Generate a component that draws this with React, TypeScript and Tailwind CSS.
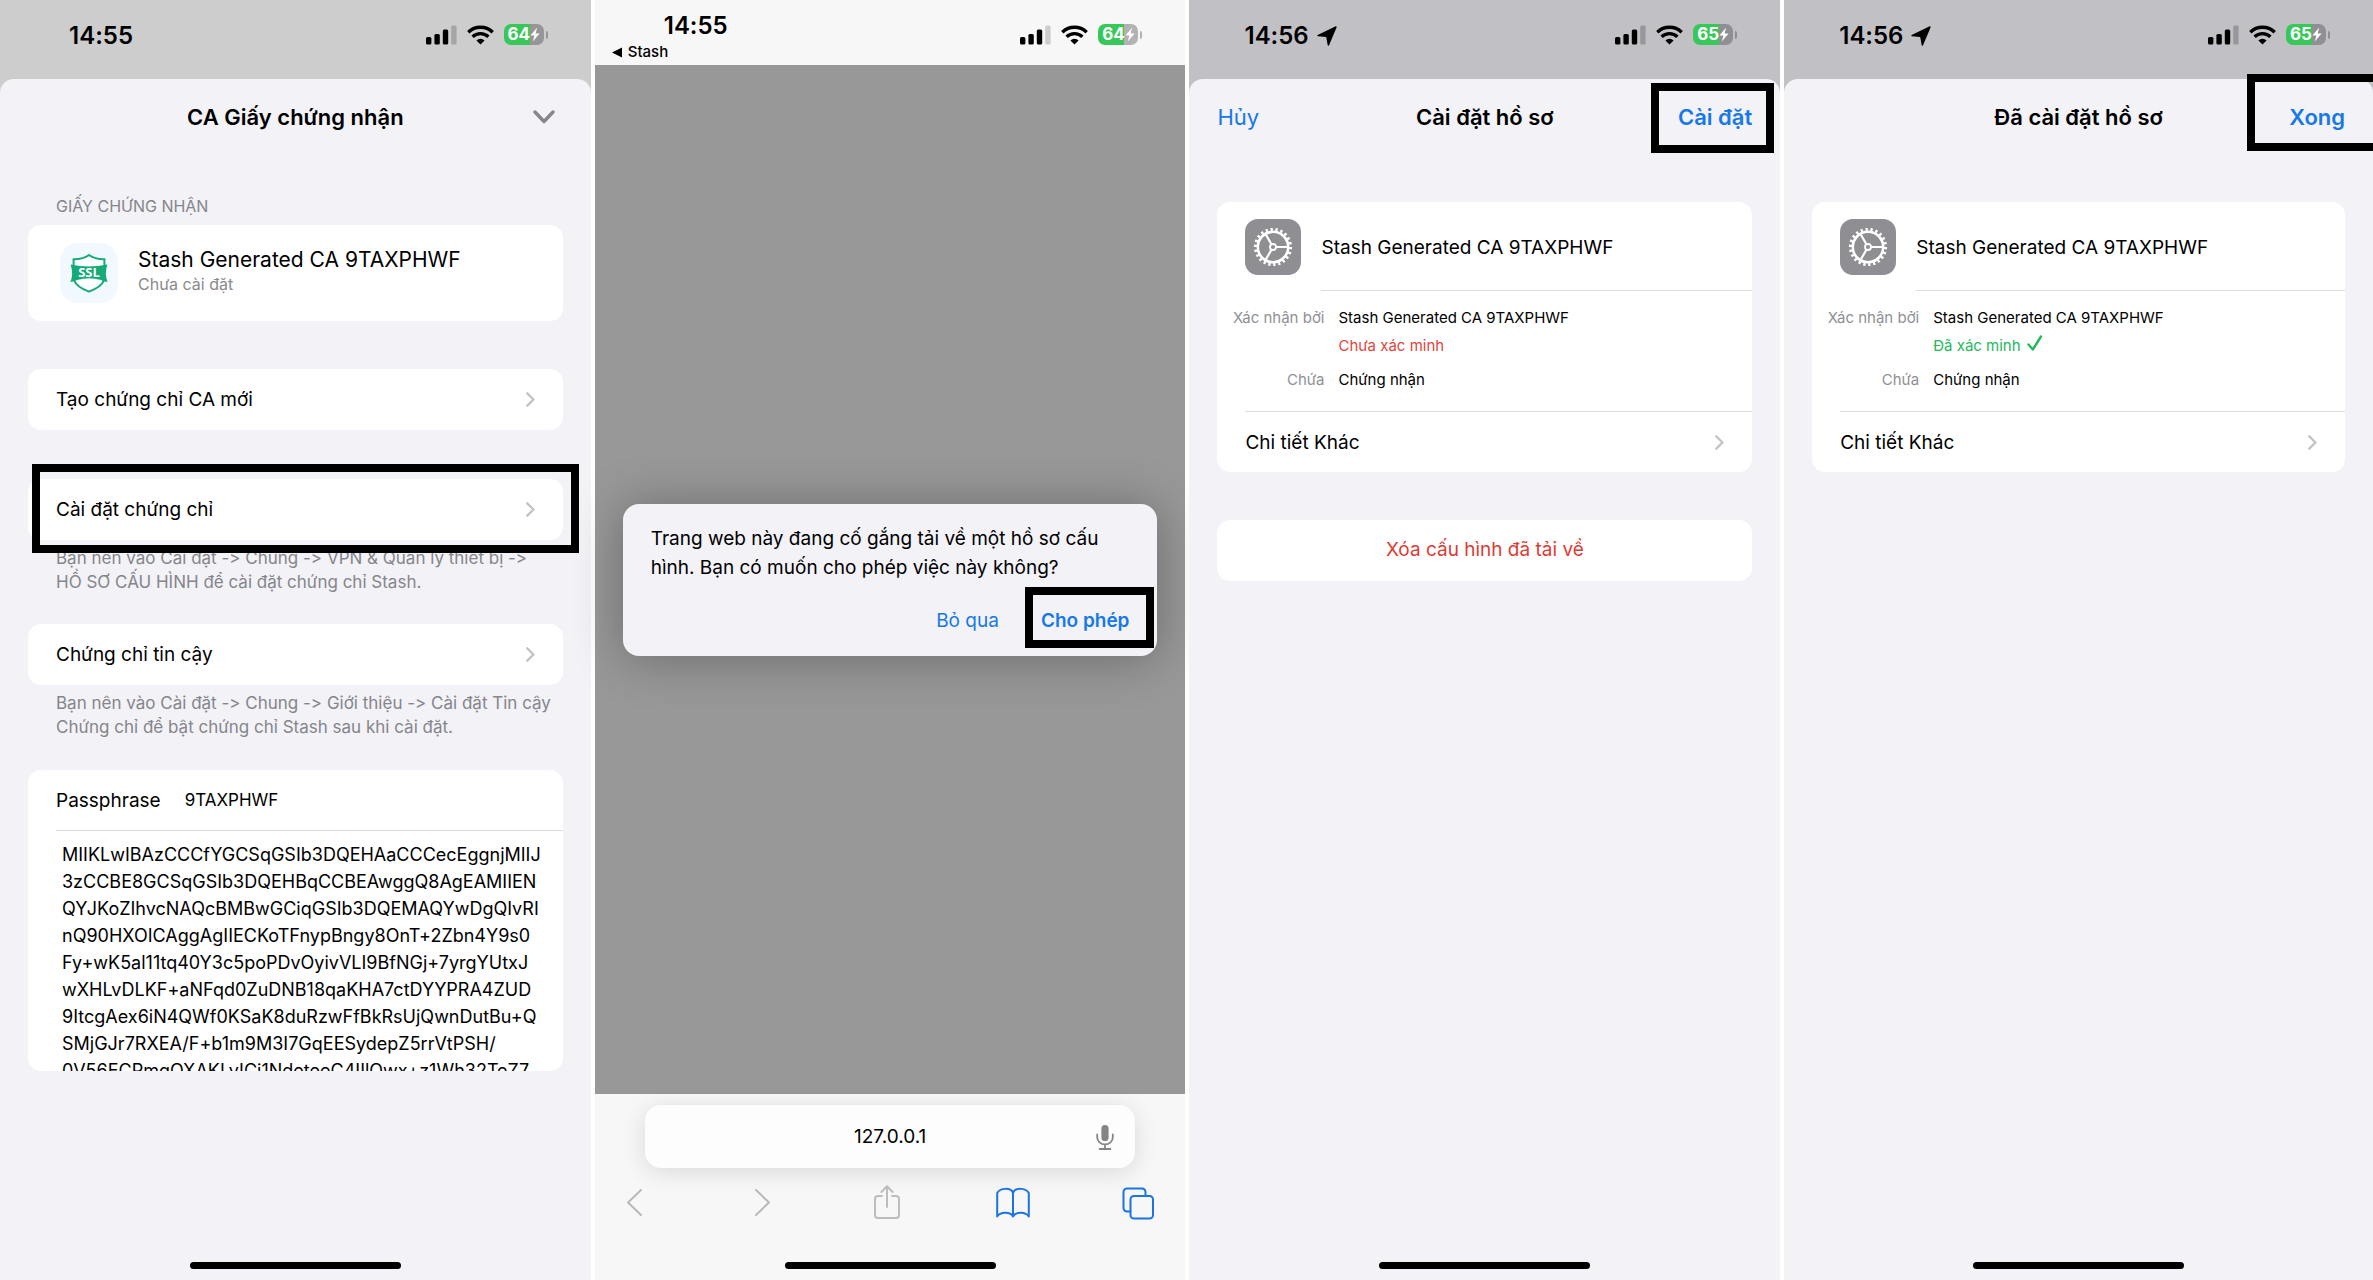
import type { ReactNode } from 'react';

const CERTIFICATE = [
  'MIIKLwIBAzCCCfYGCSqGSIb3DQEHAaCCCecEggnjMIIJ',
  '3zCCBE8GCSqGSIb3DQEHBqCCBEAwggQ8AgEAMIIEN',
  'QYJKoZIhvcNAQcBMBwGCiqGSIb3DQEMAQYwDgQIvRI',
  'nQ90HXOICAggAgIIECKoTFnypBngy8OnT+2Zbn4Y9s0',
  'Fy+wK5al11tq40Y3c5poPDvOyivVLI9BfNGj+7yrgYUtxJ',
  'wXHLvDLKF+aNFqd0ZuDNB18qaKHA7ctDYYPRA4ZUD',
  '9ItcgAex6iN4QWf0KSaK8duRzwFfBkRsUjQwnDutBu+Q',
  'SMjGJr7RXEA/F+b1m9M3I7GqEESydepZ5rrVtPSH/',
  '0V56ECPmgQXAKLvICj1NdeteeC4IIlQwx+z1Wh32TeZ7',
].join('\n');

function SignalIcon({ faded }: { faded: string }) {
  return (
    <svg width="31" height="20" viewBox="0 0 31 20" aria-hidden="true">
      <rect x="0" y="12" width="5.4" height="7.5" rx="1.5" />
      <rect x="8.4" y="9" width="5.4" height="10.5" rx="1.5" />
      <rect x="16.8" y="4.5" width="5.4" height="15" rx="1.5" />
      <rect x="25.2" y="0.5" width="5.4" height="19" rx="1.5" fill={faded} />
    </svg>
  );
}

function WifiIcon() {
  return (
    <svg width="27" height="20" viewBox="0 0 27 20" fill="none" stroke="black" strokeWidth="3.4" aria-hidden="true">
      <path d="M1.3 7.2a17.6 17.6 0 0 1 24.4 0" />
      <path d="M5.6 11.8a11.4 11.4 0 0 1 15.8 0" />
      <path d="M13.5 19.6l-4.1-4.2a5.9 5.9 0 0 1 8.2 0z" fill="black" stroke="none" />
    </svg>
  );
}

function Battery({ level, restClass }: { level: string; restClass: string }) {
  return (
    <div className="flex items-center gap-0.5">
      <div className={`flex h-[21px] w-10 items-center justify-center overflow-hidden rounded-[7px] bg-linear-to-r from-[#38c759] from-65% to-65% ${restClass}`}>
        <span className="text-[17px] leading-none font-bold text-white">{level}</span>
        <svg width="10" height="15" viewBox="0 0 10 15" fill="white" aria-hidden="true">
          <path d="M7.2 0.4 0.4 8.4h4L2.8 14.6 9.6 6.4h-4z" />
        </svg>
      </div>
      <div className={`h-2 w-0.5 rounded-r-full bg-linear-to-r from-0% to-0% ${restClass}`} />
    </div>
  );
}

function StatusIcons({ level, faded, restClass }: { level: string; faded: string; restClass: string }) {
  return (
    <div className="flex h-[21px] items-center gap-2.5">
      <SignalIcon faded={faded} />
      <WifiIcon />
      <Battery level={level} restClass={restClass} />
    </div>
  );
}

function LocationArrow() {
  return (
    <svg width="20" height="20" viewBox="0 0 20 20" stroke="black" strokeWidth="1.4" strokeLinejoin="round" aria-hidden="true">
      <path d="M19 1 11.4 19 9.8 10.4 1 9.6z" />
    </svg>
  );
}

function Chevron() {
  return (
    <svg width="9" height="15" viewBox="0 0 9 15" fill="none" stroke="#c4c4c7" strokeWidth="2.4" strokeLinecap="round" strokeLinejoin="round" aria-hidden="true">
      <path d="M1.3 1.3 7.5 7.5 1.3 13.7" />
    </svg>
  );
}

function SslIcon() {
  return (
    <div className="flex h-[60px] w-[58px] shrink-0 items-center justify-center rounded-[18px] bg-[#f2f9fe]">
      <svg width="38" height="40" viewBox="0 0 38 40" role="img" aria-label="SSL">
        <path d="M3.6 13V6.2Q13 6.4 19 2q6 4.4 15.4 4.2V13M4 27c1.8 5.5 7 8.6 15 11.6 8-3 13.2-6.1 15-11.6" fill="white" stroke="#14ab78" strokeWidth="2" />
        <path d="M.6 11.4q18.4 4.2 36.8 0-3.2 9.6.2 17.6-4.6-.4-6.6-2-12-3.6-24 0-2 1.6-6.6 2 3.4-8 .2-17.6z" fill="#14ab78" />
        <text x="19" y="24.4" textAnchor="middle" fill="white" className="font-['Open_Sans',sans-serif] text-[13px] font-bold">SSL</text>
      </svg>
    </div>
  );
}

function GearIcon() {
  return (
    <svg width="56" height="56" viewBox="0 0 56 56" fill="none" stroke="white" className="shrink-0 rounded-[13px] bg-[#8e8e93]" aria-hidden="true">
      <circle cx="28" cy="28" r="15.2" strokeWidth="2.6" />
      <circle cx="28" cy="28" r="17.6" strokeWidth="3" pathLength="220" strokeDasharray="4.6 5.4" />
      <circle cx="28" cy="28" r="3" strokeWidth="1.8" />
      <path d="M31.2 28H43M26.4 25.2 20.5 15M26.4 30.8 20.5 41" strokeWidth="2.2" />
    </svg>
  );
}

function Screen({ className, children }: { className: string; children: ReactNode }) {
  return <section className={`flex min-h-screen min-w-0 flex-col ${className}`}>{children}</section>;
}

function HomeIndicator() {
  return <div className="mx-auto mt-auto mb-[11px] h-[7px] w-[211px] rounded-full bg-black" />;
}

function StatusBar({ time, level, located, faded, restClass }: { time: string; level: string; located?: boolean; faded: string; restClass: string }) {
  return (
    <div className={`flex h-[79px] items-start justify-between pt-6 pr-[43px] ${located ? 'pl-[55px]' : 'pl-[69px]'}`}>
      <div className="flex h-6 items-center gap-2">
        <span className="text-2xl leading-none font-semibold">{time}</span>
        {located && <LocationArrow />}
      </div>
      <StatusIcons level={level} faded={faded} restClass={restClass} />
    </div>
  );
}

function Sheet({ left, title, right, children }: { left?: ReactNode; title: string; right: ReactNode; children: ReactNode }) {
  return (
    <div className="flex flex-1 flex-col rounded-t-[14px] bg-[#f2f2f7]">
      <header className="grid h-[76px] grid-cols-[1fr_auto_1fr] items-center px-7 text-[22px]">
        <div>{left}</div>
        <h1 className="font-semibold">{title}</h1>
        <div className="flex justify-end">{right}</div>
      </header>
      {children}
      <HomeIndicator />
    </div>
  );
}

function RowButton({ children }: { children: ReactNode }) {
  return (
    <button className="flex h-[61px] w-full items-center justify-between rounded-[13px] bg-white px-7 text-left text-[19px]">
      <span className="pt-0.5">{children}</span>
      <Chevron />
    </button>
  );
}

function Note({ lines }: { lines: string[] }) {
  return (
    <p className="mt-1.5 px-7 text-[17px] leading-6 whitespace-nowrap text-[#85858b]">
      {lines.map((line) => (
        <span key={line} className="block">{line}</span>
      ))}
    </p>
  );
}

function CertificateScreen() {
  return (
    <Screen className="bg-[#cdcdcd]">
      <StatusBar time="14:55" level="64" faded="#a5a5a5" restClass="to-[#969696]" />
      <Sheet
        title="CA Giấy chứng nhận"
        right={
          <button aria-label="Đóng" className="mr-2">
            <svg width="22" height="14" viewBox="0 0 22 14" fill="none" stroke="#85858a" strokeWidth="3.4" strokeLinecap="round" strokeLinejoin="round">
              <path d="M2 2l9 9.500L20 2" />
            </svg>
          </button>
        }
      >
        <div className="flex flex-col px-7 pt-[39px]">
          <h2 className="px-7 text-base leading-6 text-[#85858b]">GIẤY CHỨNG NHẬN</h2>
          <div className="mt-[7px] flex h-24 items-center gap-5 rounded-[13px] bg-white px-8">
            <SslIcon />
            <div className="pb-1">
              <p className="text-[21px] leading-[26px]">Stash Generated CA 9TAXPHWF</p>
              <p className="text-base leading-[22px] text-[#8a8a8e]">Chưa cài đặt</p>
            </div>
          </div>
          <div className="mt-12">
            <RowButton>Tạo chứng chỉ CA mới</RowButton>
          </div>
          <div className="relative mt-[49px]">
            <RowButton>Cài đặt chứng chỉ</RowButton>
            <div className="pointer-events-none absolute -top-[15px] -right-4 -bottom-[13px] left-1 border-8 border-black" />
          </div>
          <Note lines={['Bạn nên vào Cài đặt -> Chung -> VPN & Quản lý thiết bị ->', 'HỒ SƠ CẤU HÌNH để cài đặt chứng chỉ Stash.']} />
          <div className="mt-[30px]">
            <RowButton>Chứng chỉ tin cậy</RowButton>
          </div>
          <Note lines={['Bạn nên vào Cài đặt -> Chung -> Giới thiệu -> Cài đặt Tin cậy', 'Chứng chỉ để bật chứng chỉ Stash sau khi cài đặt.']} />
          <div className="mt-[31px] overflow-hidden rounded-[13px] bg-white pl-7">
            <div className="flex h-[61px] items-center gap-6 border-b border-[#dddddf] pt-0.5">
              <label htmlFor="passphrase" className="text-[19px]">Passphrase</label>
              <input id="passphrase" readOnly value="9TAXPHWF" className="min-w-0 flex-1 bg-transparent text-[17px] outline-none" />
            </div>
            <textarea
              readOnly
              aria-label="Chứng chỉ"
              value={CERTIFICATE}
              className="block h-60 w-full resize-none overflow-hidden bg-transparent pt-2.5 pl-1.5 text-lg leading-[27px] whitespace-pre outline-none"
            />
          </div>
        </div>
      </Sheet>
    </Screen>
  );
}

function ToolbarIcon({ label, className, children }: { label: string; className: string; children: ReactNode }) {
  return (
    <button aria-label={label} className={className}>
      <svg width="34" height="36" viewBox="0 0 34 36" fill="none" stroke="currentColor" strokeWidth="2" strokeLinecap="round" strokeLinejoin="round">
        {children}
      </svg>
    </button>
  );
}

function BrowserScreen() {
  return (
    <Screen className="bg-[#f7f7f7]">
      <div className="flex h-[65px] items-start justify-between pr-[43px] pl-[17px]">
        <div className="flex flex-col pt-3.5">
          <span className="pl-[52px] text-2xl leading-6 font-semibold">14:55</span>
          <a href="#stash" className="mt-1 flex items-center gap-1.5 text-[15px] leading-5 font-medium">
            <svg width="10" height="11" viewBox="0 0 10 11" aria-hidden="true">
              <path d="M10 .5v10L0 5.500z" />
            </svg>
            Stash
          </a>
        </div>
        <div className="pt-6">
          <StatusIcons level="64" faded="#cdcdcd" restClass="to-[#b2b2b2]" />
        </div>
      </div>

      <div className="flex flex-1 items-center bg-[#989898] px-7">
        <div role="dialog" aria-label="Tải về hồ sơ" className="w-full rounded-2xl bg-[#f2f2f7] px-7 py-5 text-[19px] shadow-[0_2px_50px_rgba(0,0,0,0.3)]">
          <p className="leading-[29px] whitespace-nowrap">
            <span className="block">Trang web này đang cố gắng tải về một hồ sơ cấu</span>
            <span className="block">hình. Bạn có muốn cho phép việc này không?</span>
          </p>
          <div className="mt-6 flex justify-end gap-[42px] leading-[30px] text-[#1778e8]">
            <button>Bỏ qua</button>
            <div className="relative">
              <button className="font-semibold">Cho phép</button>
              <div className="pointer-events-none absolute -top-[19px] -right-[25px] -bottom-3 -left-4 border-8 border-black" />
            </div>
          </div>
        </div>
      </div>

      <div className="flex h-[186px] flex-col pt-[11px]">
        <div className="mx-[50px] flex h-[63px] items-center rounded-2xl bg-[#fdfdfd] pr-[21px] pl-[39px] shadow-[0_4px_24px_rgba(0,0,0,0.12)]">
          <input aria-label="Địa chỉ" defaultValue="127.0.0.1" className="min-w-0 flex-1 bg-transparent pt-0.5 text-center text-[19px] outline-none" />
          <button aria-label="Nhập bằng giọng nói">
            <svg width="18" height="26" viewBox="0 0 18 26" fill="none" stroke="#858585" strokeWidth="1.8" strokeLinecap="round">
              <rect x="5.4" y="1" width="7.2" height="16" rx="3.6" fill="#858585" stroke="none" />
              <path d="M1.2 10.500v2.700a7.800 7.200 0 0 0 15.600 0v-2.700M9 20.600V25M3.600 25h10.800" />
            </svg>
          </button>
        </div>
        <div className="mt-4 flex items-center justify-between pr-[30px] pl-6">
          <ToolbarIcon label="Quay lại" className="text-[#b9b9b9]"><path d="M22 6 9 18.500 22 31" /></ToolbarIcon>
          <ToolbarIcon label="Tiến" className="text-[#b9b9b9]"><path d="M12 6l13 12.500L12 31" /></ToolbarIcon>
          <ToolbarIcon label="Chia sẻ" className="text-[#bdbdbd]">
            <path d="M12 12H8a3 3 0 0 0-3 3v16a3 3 0 0 0 3 3h18a3 3 0 0 0 3-3V15a3 3 0 0 0-3-3h-4M17 23V2.500M11.400 8 17 2.200 22.600 8" />
          </ToolbarIcon>
          <ToolbarIcon label="Dấu trang" className="text-[#1b74e4]">
            <path d="M17 9C15.400 3.400 4 3.600 1.200 9v23.500C4 28 14 27.200 17 32.500 20 27.200 30 28 32.800 32.500V9C30 3.600 18.600 3.400 17 9zM17 9v23" />
          </ToolbarIcon>
          <ToolbarIcon label="Các tab" className="text-[#1b74e4]">
            <rect x="9.5" y="12" width="22.5" height="22.5" rx="3.5" />
            <path d="M9.500 27.500H6A3.500 3.500 0 0 1 2.500 24V8A3.500 3.500 0 0 1 6 4.500h15A3.500 3.500 0 0 1 24.500 8v4" />
          </ToolbarIcon>
        </div>
        <HomeIndicator />
      </div>
    </Screen>
  );
}

function ProfileCard({ status }: { status: ReactNode }) {
  return (
    <div className="mx-7 mt-[47px] rounded-[13px] bg-white">
      <div className="flex h-[89px] items-center gap-5 pl-7">
        <GearIcon />
        <h2 className="flex flex-1 self-stretch border-b border-[#dddddf] pt-1 text-[19px]">
          <span className="self-center">Stash Generated CA 9TAXPHWF</span>
        </h2>
      </div>
      <dl className="grid grid-cols-[107px_1fr] gap-x-3.5 pt-[13px] pb-[17px] text-[15px] leading-7">
        <dt className="text-right text-[#909094]">Xác nhận bởi</dt>
        <dd>Stash Generated CA 9TAXPHWF</dd>
        <dd className="col-start-2">{status}</dd>
        <dt className="mt-1.5 text-right text-[#909094]">Chứa</dt>
        <dd className="mt-1.5">Chứng nhận</dd>
      </dl>
      <div className="ml-7 border-t border-[#dddddf]">
        <button className="flex h-[60px] w-full items-center justify-between pr-7 text-left text-[19px]">
          <span className="pt-0.5">Chi tiết Khác</span>
          <Chevron />
        </button>
      </div>
    </div>
  );
}

function InstallScreen() {
  return (
    <Screen className="bg-[#c1c0c5]">
      <StatusBar time="14:56" level="65" located faded="#98979c" restClass="to-[#8f8f94]" />
      <Sheet
        left={<button className="text-[#1778e8]">Hủy</button>}
        title="Cài đặt hồ sơ"
        right={
          <div className="relative">
            <button className="font-semibold text-[#1778e8]">Cài đặt</button>
            <div className="pointer-events-none absolute -top-[18px] -right-[22px] -bottom-[19px] -left-[27px] border-8 border-black" />
          </div>
        }
      >
        <ProfileCard status={<span className="text-[#e0453c]">Chưa xác minh</span>} />
        <button className="mx-7 mt-12 h-[61px] rounded-[13px] bg-white text-[19px] text-[#de3b33]">Xóa cấu hình đã tải về</button>
      </Sheet>
    </Screen>
  );
}

function InstalledScreen() {
  return (
    <Screen className="overflow-hidden bg-[#c1c0c5]">
      <StatusBar time="14:56" level="65" located faded="#98979c" restClass="to-[#8f8f94]" />
      <Sheet
        title="Đã cài đặt hồ sơ"
        right={
          <div className="relative">
            <button className="font-semibold text-[#1778e8]">Xong</button>
            <div className="pointer-events-none absolute -top-[27px] -right-7 -bottom-[17px] -left-[42px] border-8 border-r-0 border-black" />
          </div>
        }
      >
        <ProfileCard
          status={
            <span className="flex items-center gap-1.5 text-[#25b85a]">
              Đã xác minh
              <svg width="16" height="16" viewBox="0 0 16 16" fill="none" stroke="currentColor" strokeWidth="2.4" strokeLinecap="round" strokeLinejoin="round" className="mb-1.5" aria-hidden="true">
                <path d="M1.500 9.500 5.800 14.500 14 1.500" />
              </svg>
            </span>
          }
        />
      </Sheet>
    </Screen>
  );
}

export default function App() {
  return (
    <main className="grid min-h-screen grid-cols-[591fr_591fr_591fr_589fr] gap-1 bg-white font-['Inter',sans-serif] text-black [font-variant-ligatures:no-contextual]">
      <CertificateScreen />
      <BrowserScreen />
      <InstallScreen />
      <InstalledScreen />
    </main>
  );
}
